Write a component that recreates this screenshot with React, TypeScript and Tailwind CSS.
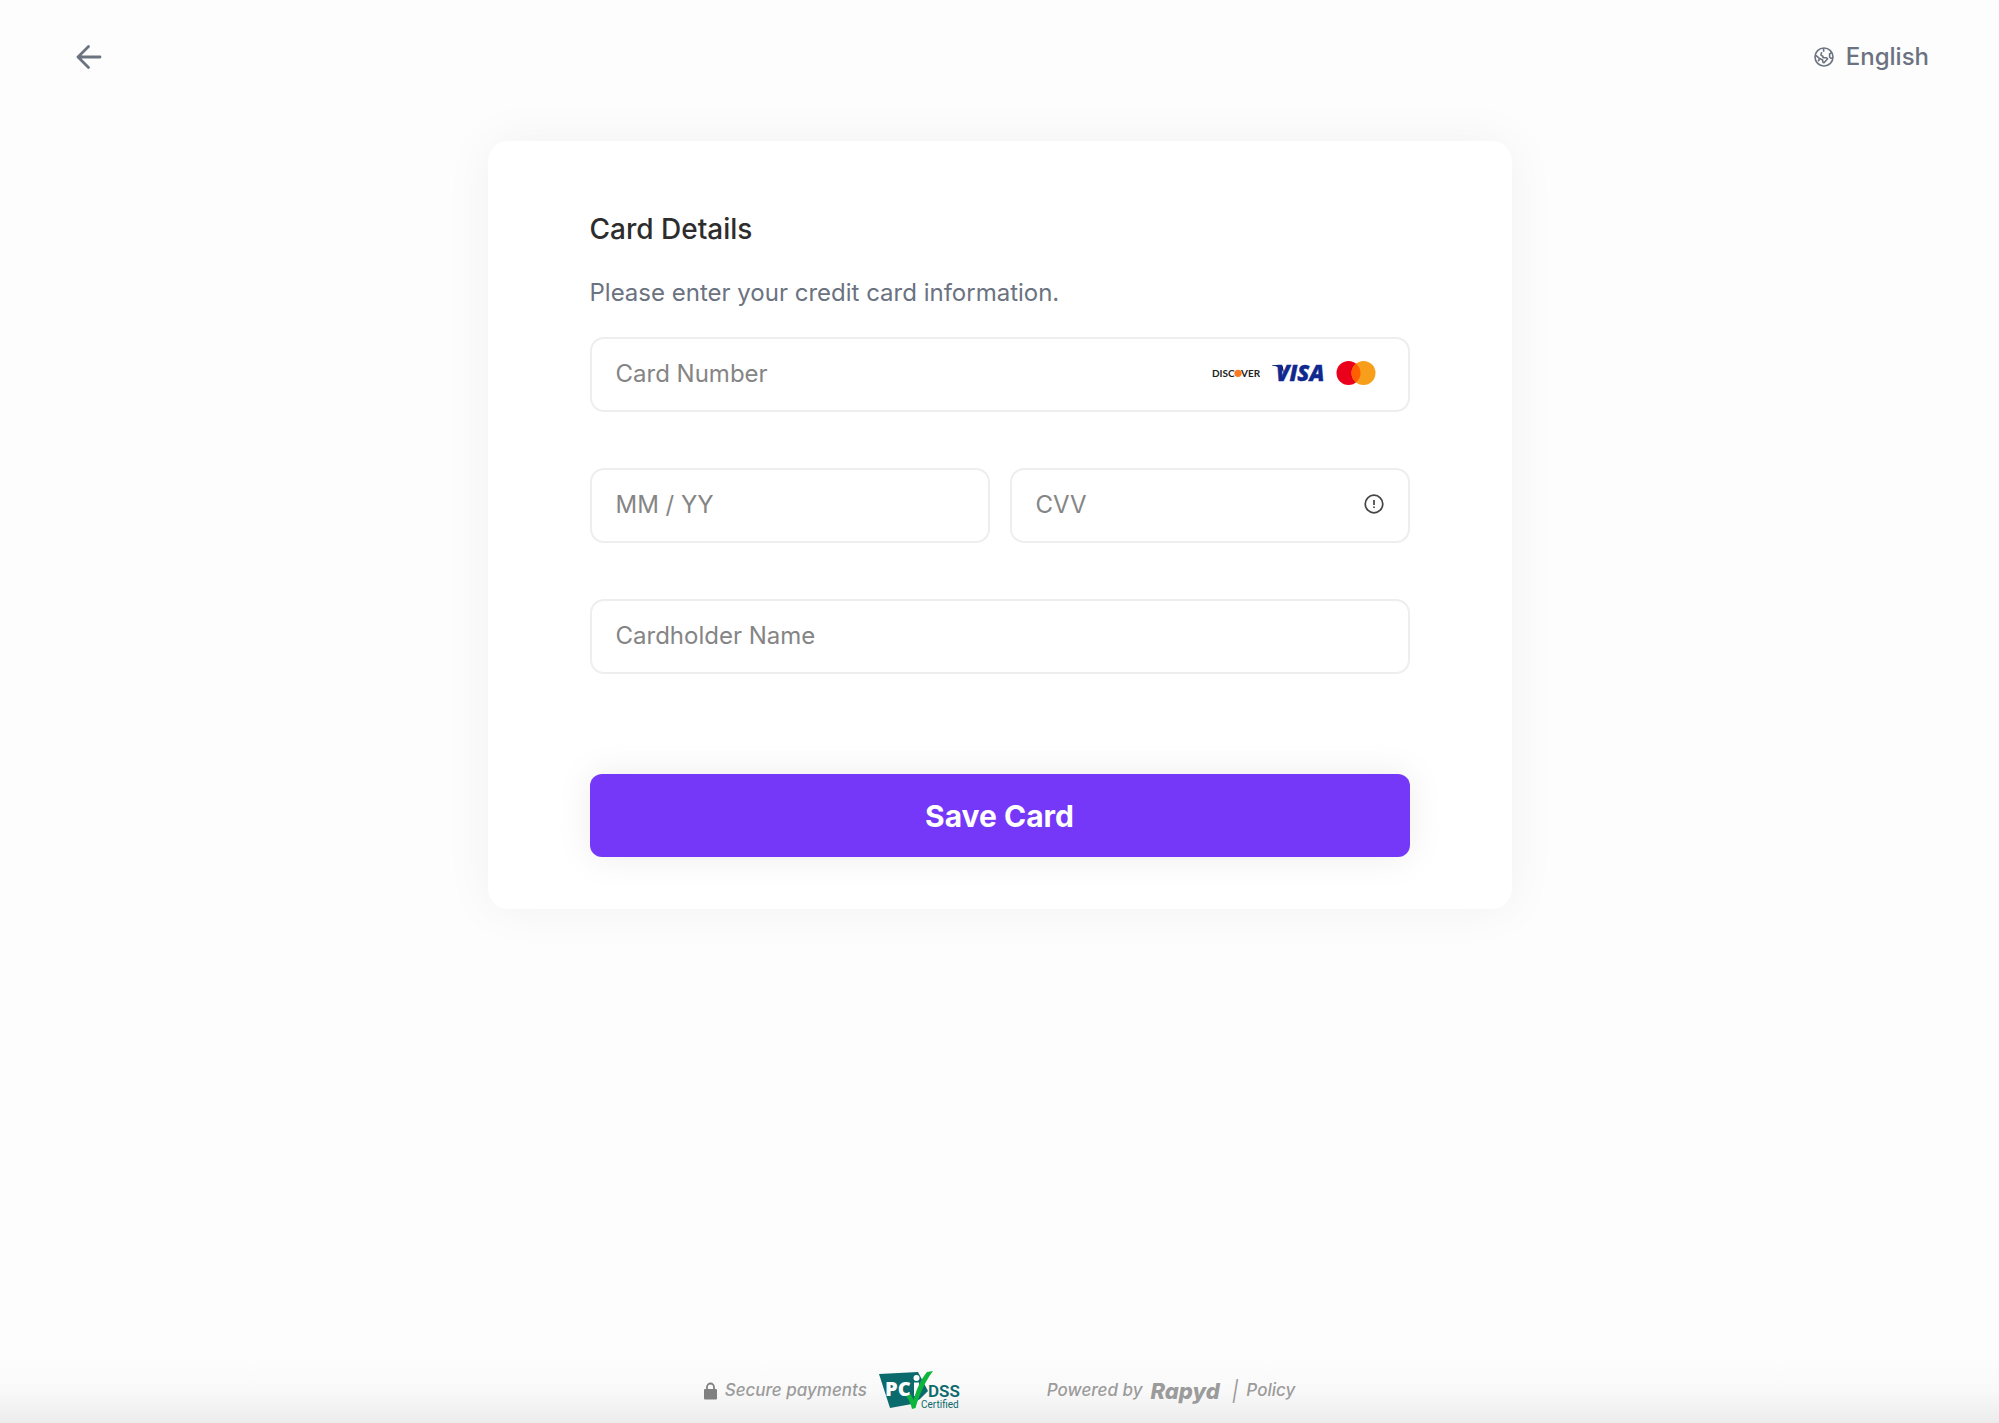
import type { ReactNode } from "react";

const ArrowLeftIcon = () => (
  <svg className="h-8 w-8" viewBox="0 0 32 32" fill="none" stroke="currentColor" strokeWidth="2.8" aria-hidden="true">
    <path d="M30 16H8M18.500 5.500 8 16l10.500 10.500" strokeLinecap="round" strokeLinejoin="round" />
  </svg>
);

const GlobeIcon = () => (
  <svg className="h-5 w-5" viewBox="0 0 20 20" fill="none" stroke="currentColor" strokeWidth="1.600" strokeLinejoin="round" aria-hidden="true">
    <circle cx="10" cy="10" r="9" />
    <path d="M9.600 1.200v3.600M7.600 5.200 7 8.200l2 1.200v1.400h3.600l1 1-3.600 4-1-.4-.4-2.400-3.200-1.600L1.800 8.400" />
    <path d="M17.800 5.400 15.600 7v3l1.200 1.200 2-.2M5.600 12l-1.400 2.200" />
  </svg>
);

const InfoIcon = () => (
  <svg className="h-5 w-5" viewBox="0 0 20 20" fill="none" stroke="currentColor" aria-hidden="true">
    <circle cx="10" cy="10" r="8.8" strokeWidth="1.7" />
    <path d="M10 6v5M10 12.500v1.500" strokeWidth="1.700" />
  </svg>
);

const LockIcon = () => (
  <svg className="h-[18px] w-[13px]" viewBox="0 0 13 18" aria-hidden="true">
    <path d="M3 8V5a3.500 3.500 0 0 1 7 0v3" fill="none" stroke="currentColor" strokeWidth="1.8" />
    <rect y="7" width="13" height="10.500" rx="1" fill="currentColor" />
  </svg>
);

const DiscoverLogo = () => (
  <svg className="h-4 w-12" viewBox="0 0 48 16" role="img" aria-label="Discover">
    <g fill="#222" fontFamily="Lato, sans-serif" fontSize="10" fontWeight="700">
      <text x="0" y="12">DISC</text>
      <text x="29" y="12">VER</text>
    </g>
    <circle cx="26" cy="8.300" r="3.600" fill="#f97a1f" />
  </svg>
);

const VisaLogo = () => (
  <svg className="h-8 w-[52px]" viewBox="0 0 52 32" role="img" aria-label="Visa">
    <path d="M0 8h8.500c1.400 0 2 .6 2.300 1.600L12 16 9.500 12.600C7.500 10.500 4.500 9 0 8.500Z" fill="#0b1f6b" />
    <text x="4" y="24" fill="#10298e" stroke="#10298e" strokeWidth="0.4" fontFamily="'Open Sans', sans-serif" fontSize="22" fontStyle="italic" fontWeight="800">
      VISA
    </text>
  </svg>
);

const MastercardLogo = () => (
  <svg className="h-6 w-10" viewBox="0 0 40 24" role="img" aria-label="Mastercard">
    <circle cx="12.500" cy="12" r="12" fill="#eb001b" />
    <circle cx="27.500" cy="12" r="12" fill="#f79e1b" />
    <path d="M20 2.600a12 12 0 0 1 0 18.800 12 12 0 0 1 0-18.800Z" fill="#ff5f00" />
  </svg>
);

const PciLogo = () => (
  <svg className="h-10 w-[84px] not-italic" viewBox="0 0 84 40" role="img" aria-label="PCI DSS Certified">
    <path d="M0 3 39 1l10 19-8 8-8 5-22 4Z" fill="#0b6a6c" />
    <text x="6" y="25" fill="#fff" fontFamily="'Open Sans', sans-serif" fontSize="20" fontWeight="800">PC</text>
    <circle cx="37.500" cy="7" r="3" fill="#fff" />
    <path d="M35 11.500h5V25h-5Z" fill="#fff" />
    <g fill="#0b6a6c" fontFamily="Roboto, sans-serif">
      <text x="49" y="26" fontSize="17" fontWeight="600">DSS</text>
      <text x="42" y="37" fontSize="10" fontWeight="400">Certified</text>
    </g>
    <path d="m27 25 5-1.500 2.500 5.500C38 17 42 8 48 1l6-1C45 12 40 25 36.500 37L33 38c-1-5-3-9-6-13Z" fill="#0db53c" />
  </svg>
);

interface FieldProps {
  id: string;
  label: string;
  autoComplete: string;
  children?: ReactNode;
}

const Field = ({ id, label, autoComplete, children }: FieldProps) => (
  <div className="flex h-[75px] items-center rounded-[14px] border-2 border-[#eee] bg-white px-6 pb-[3px]">
    <input
      id={id}
      type="text"
      aria-label={label}
      placeholder={label}
      autoComplete={autoComplete}
      className="h-full min-w-0 flex-1 bg-transparent text-2xl text-[#333] outline-none placeholder:text-[#858585]"
    />
    {children}
  </div>
);

const App = () => {
  return (
    <div className="flex min-h-screen flex-col bg-[#fdfdfd] font-['Inter',sans-serif]">
      <header className="flex h-[114px] items-center justify-between px-[70px]">
        <button type="button" aria-label="Back" className="text-[#6b7280]">
          <ArrowLeftIcon />
        </button>
        <button type="button" className="flex items-center gap-3 text-2xl font-medium text-[#6b7280]">
          <GlobeIcon />
          <span>English</span>
        </button>
      </header>

      <main className="mx-auto mt-[27px] w-full max-w-[1024px] rounded-[20px] bg-white px-[102px] pt-[70px] pb-[52px] shadow-[0_0_50px_rgba(0,0,0,0.05)]">
        <h1 className="text-[28px] leading-9 font-medium text-[#2d2d2d]">Card Details</h1>
        <p className="mt-[30px] text-2xl text-[#6b7280]">Please enter your credit card information.</p>

        <form className="mt-7" onSubmit={(e) => e.preventDefault()}>
          <div className="grid grid-cols-2 gap-x-5 gap-y-14">
            <div className="col-span-2">
              <Field id="card-number" label="Card Number" autoComplete="cc-number">
                <div className="mr-2 flex items-center gap-3">
                  <DiscoverLogo />
                  <VisaLogo />
                  <MastercardLogo />
                </div>
              </Field>
            </div>
            <Field id="expiry" label="MM / YY" autoComplete="cc-exp" />
            <Field id="cvv" label="CVV" autoComplete="cc-csc">
              <button type="button" aria-label="What is CVV?" className="text-[#444]">
                <InfoIcon />
              </button>
            </Field>
            <div className="col-span-2">
              <Field id="holder" label="Cardholder Name" autoComplete="cc-name" />
            </div>
          </div>

          <button
            type="submit"
            className="mt-[100px] h-[83px] w-full rounded-xl bg-[#7538f8] text-3xl font-bold text-white shadow-[0_0_36px_rgba(0,0,0,0.08)]"
          >
            Save Card
          </button>
        </form>
      </main>

      <footer className="mt-auto flex h-16 items-center justify-center gap-[84px] bg-linear-to-b from-[#fdfdfd] via-[#f9f9f9] to-[#ececec] text-[17px] font-medium text-[#9b9b9b] italic">
        <div className="flex items-center gap-3">
          <div className="flex items-center gap-2">
            <span className="text-[#808080]"><LockIcon /></span>
            <span>Secure payments</span>
          </div>
          <PciLogo />
        </div>
        <div className="flex items-center gap-2">
          <span>Powered by</span>
          <a href="#rapyd" className="mr-1 text-[22px] font-extrabold">Rapyd</a>
          <span className="text-xl font-normal">|</span>
          <a href="#policy">Policy</a>
        </div>
      </footer>
    </div>
  );
};

export default App;
